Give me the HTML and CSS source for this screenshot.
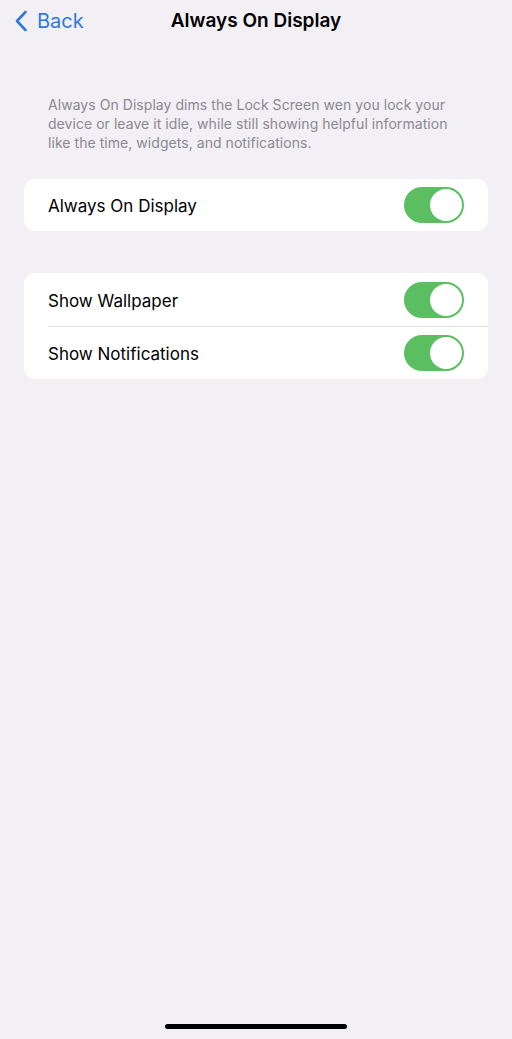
FILE: index.html
```
<!DOCTYPE html>
<html>
<head>
<meta charset="utf-8">
<link rel="stylesheet" href="styles.css">
</head>
<body>
<div class="screen">
  <header class="navbar">
    <div class="back">
      <svg class="chev" width="14" height="22" viewBox="0 0 14 22"><path d="M11.5 2 L3 11 L11.5 20" fill="none" stroke="#2f7bdc" stroke-width="2.6" stroke-linecap="round" stroke-linejoin="round"/></svg>
      <span>Back</span>
    </div>
    <h1 class="title">Always On Display</h1>
  </header>
  <p class="desc">Always On Display dims the Lock Screen wen you lock your device or leave it idle, while still showing helpful information like the time, widgets, and notifications.</p>
  <section class="card">
    <div class="row"><span class="label">Always On Display</span><span class="toggle"><span class="knob"></span></span></div>
  </section>
  <section class="card card2">
    <div class="row"><span class="label">Show Wallpaper</span><span class="toggle"><span class="knob"></span></span></div>
    <div class="row divided"><span class="label">Show Notifications</span><span class="toggle"><span class="knob"></span></span></div>
  </section>
  <div class="spacer"></div>
  <div class="home"></div>
</div>
</body>
</html>
```
FILE: styles.css
```
html, body { margin: 0; padding: 0; }
body { background: #f2eff5; font-family: "Inter", "Liberation Sans", sans-serif; color: #000; }
.screen { width: 512px; height: 1039px; display: flex; flex-direction: column; }
.navbar { position: relative; height: 40px; display: flex; align-items: center; justify-content: center; }
.back { position: absolute; left: 14px; top: 9px; display: flex; align-items: center; gap: 9px; color: #2f7bdc; font-size: 20px; }
.chev { display: block; }
.title { margin: 0; font-size: 19px; font-weight: 600; letter-spacing: 0; }
.desc { margin: 55px 52px 0 48px; font-size: 14px; line-height: 19px; color: #8b8a8f; letter-spacing: 0.05px; }
.card { margin: 27px 24px 0 24px; background: #fff; border-radius: 11px; }
.card2 { margin-top: 42px; }
.row { height: 53px; display: flex; align-items: center; justify-content: space-between; padding: 0 24px; box-sizing: border-box; }
.card > .row:only-child { height: 52px; }
.divided { position: relative; }
.divided::before { content: ""; position: absolute; left: 24px; right: 0; top: 0; height: 1px; background: #e2e1e6; }
.label { font-size: 17px; padding-top: 2px; }
.toggle { width: 60px; height: 36px; border-radius: 18px; background: #5bbf62; position: relative; }
.knob { position: absolute; right: 2px; top: 2px; width: 32px; height: 32px; border-radius: 50%; background: #fff; }
.spacer { flex: 1; }
.home { width: 182px; height: 5px; border-radius: 3px; background: #000; margin: 0 auto 10px; }
```
